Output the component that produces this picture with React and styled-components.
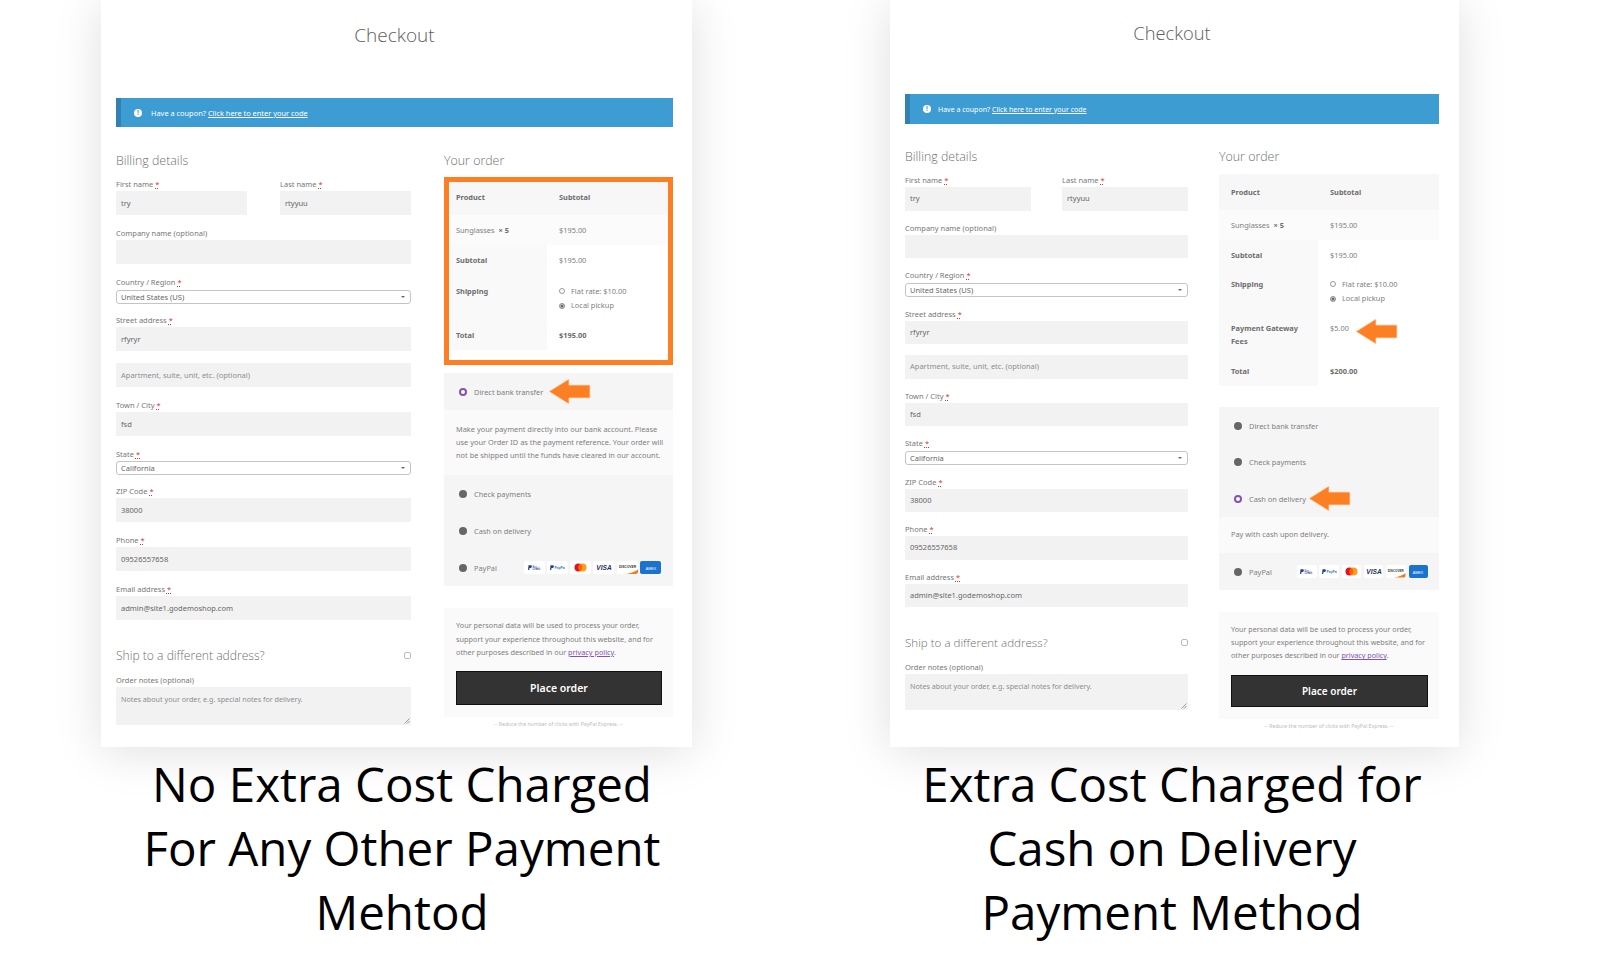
import React from 'react';
import styled, { createGlobalStyle, ThemeProvider } from 'styled-components';

const GlobalStyle = createGlobalStyle`
  html, body { margin: 0; padding: 0; background: #fff; overflow: hidden; }
  body { font-family: "Noto Sans", "Open Sans", sans-serif; }
`;

const leftTheme = {
  width: 591, padLeft: 15, padRight: 19, colLeft: 295, colRight: 229, colGap: 33,
  titleTop: 23, titleBottom: 50, titleSize: 19, couponH: 29, couponFont: 7.4, dotGap: 9,
  mainTop: 27, headH: 23, labelsTop: 1,
  inputH: 24, fieldGap: 12, selectGap: 10, selectTop: 0.5, twoGap: 33,
  shipH: 42, shipFont: 12.1, notesH: 38, chipW: 21, chipGap: 2.3, chipH: 13,
  termsLine: 13.6, termsFont: 7.3, buttonH: 34, buttonTop: 11, buttonFont: 10.5,
  thWidth: 98, cellNudge: 1, cellTop: 9.5, headLift: 3, capPadL: 11, capPadR: 0
};

const rightTheme = {
  width: 569, padLeft: 15, padRight: 20, colLeft: 283, colRight: 220, colGap: 31,
  titleTop: 20, titleBottom: 49, titleSize: 18.3, couponH: 30, couponFont: 7, dotGap: 7,
  mainTop: 26, headH: 24, labelsTop: 0,
  inputH: 23.5, fieldGap: 11, selectGap: 10.5, selectTop: 1, twoGap: 31,
  shipH: 43, shipFont: 11.6, notesH: 36, chipW: 19.5, chipGap: 2.8, chipH: 12.5,
  termsLine: 13.2, termsFont: 7.2, buttonH: 32, buttonTop: 12.5, buttonFont: 10,
  thWidth: 99, cellNudge: 0, cellTop: 7.5, headLift: 0, capPadL: 0, capPadR: 5
};

const Page = styled.div`
  display: flex;
  align-items: flex-start;
  gap: 198px;
  padding-left: 101px;
  height: 960px;
  box-sizing: border-box;
`;

const Panel = styled.section`
  width: ${p => p.theme.width}px;
  flex: none;
`;

const Card = styled.div`
  height: 747px;
  box-sizing: border-box;
  background: #fff;
  box-shadow: 0 4px 45px rgba(0, 0, 0, 0.13);
  padding: ${p => p.theme.titleTop}px ${p => p.theme.padRight}px 0 ${p => p.theme.padLeft}px;
`;

const Title = styled.h1`
  margin: 0 0 ${p => p.theme.titleBottom}px;
  height: 25px;
  line-height: 25px;
  font-size: ${p => p.theme.titleSize}px;
  font-weight: 300;
  color: #5d5d5d;
  text-align: center;
  font-family: "Open Sans", sans-serif;
`;

const Coupon = styled.div`
  display: flex;
  align-items: center;
  height: ${p => p.theme.couponH}px;
  box-sizing: border-box;
  background: #3d9cd2;
  border-left: 5px solid #2f82b3;
  padding-left: 13px;
  font-size: ${p => p.theme.couponFont}px;
  color: #fff;
`;

const InfoDot = styled.span`
  width: 8px;
  height: 8px;
  border-radius: 50%;
  background: #fff;
  color: #3d9cd2;
  font-size: 6.5px;
  font-weight: 700;
  line-height: 8px;
  text-align: center;
  margin-right: ${p => p.theme.dotGap}px;
`;

const CouponLink = styled.a`
  color: #fff;
  text-decoration: underline;
  margin-left: 2px;
`;

const Columns = styled.div`
  display: grid;
  grid-template-columns: ${p => p.theme.colLeft}px ${p => p.theme.colRight}px;
  column-gap: ${p => p.theme.colGap}px;
  padding-top: ${p => p.theme.mainTop}px;
`;

const SectionHead = styled.h3`
  margin: 0;
  height: ${p => p.theme.headH}px;
  line-height: 14px;
  font-size: 12.4px;
  font-weight: 300;
  color: #6f6f6f;
  font-family: "Open Sans", sans-serif;
`;

const FieldRow = styled.div`
  display: flex;
  justify-content: space-between;
  padding-top: ${p => p.theme.labelsTop}px;
`;

const Field = styled.div`
  width: ${p => (p.$half ? `${(p.theme.colLeft - p.theme.twoGap) / 2}px` : '100%')};
  margin-bottom: ${p => (p.$select ? p.theme.selectGap : p.theme.fieldGap)}px;
`;

const Label = styled.label`
  display: block;
  height: 13px;
  line-height: 12px;
  font-size: 7.5px;
  color: #777;
`;

const Req = styled.span`
  color: #d33;
  text-decoration: underline dotted;
`;

const Input = styled.div`
  height: ${p => p.theme.inputH}px;
  line-height: ${p => p.theme.inputH}px;
  padding-left: 5px;
  background: #f2f2f2;
  font-size: 7.5px;
  color: ${p => (p.$placeholder ? '#8e8e8e' : '#666')};
`;

const Select = styled.div`
  display: flex;
  align-items: center;
  justify-content: space-between;
  height: 14px;
  box-sizing: border-box;
  margin-top: ${p => p.theme.selectTop}px;
  padding: 0 5px 0 4px;
  background: #fff;
  border: 1px solid #c4c4c4;
  border-radius: 3px;
  font-size: 7.5px;
  color: #666;
`;

const Caret = styled.span`
  width: 0;
  height: 0;
  border-left: 2px solid transparent;
  border-right: 2px solid transparent;
  border-top: 2.5px solid #666;
`;

const ShipRow = styled.div`
  display: flex;
  align-items: center;
  justify-content: space-between;
  height: ${p => p.theme.shipH}px;
  font-size: ${p => p.theme.shipFont}px;
  font-weight: 300;
  color: #6f6f6f;
  font-family: "Open Sans", sans-serif;
  padding-top: 5px;
  box-sizing: border-box;
`;

const Check = styled.span`
  width: 7px;
  height: 7px;
  box-sizing: border-box;
  border: 1px solid #bbb;
  border-radius: 2px;
`;

const Notes = styled.div`
  position: relative;
  height: ${p => p.theme.notesH}px;
  padding: 7px 5px 0;
  box-sizing: border-box;
  background: #f2f2f2;
  font-size: 7.2px;
  color: #8e8e8e;
`;

const Grip = styled.svg`
  position: absolute;
  right: 1px;
  bottom: 1px;
`;

const OrderFrame = styled.div`
  ${p => (p.$highlight
    ? `border: 5.5px solid #fd7f23; height: 188px; box-sizing: border-box;`
    : '')}
  margin-bottom: ${p => p.$after}px;
`;

const OrderTable = styled.table`
  width: 100%;
  border-collapse: collapse;
  table-layout: fixed;
  font-size: 7.4px;
  color: #808080;
`;

const Tr = styled.tr`
  height: ${p => p.$h}px;
  background: ${p => p.$bg || 'transparent'};
`;

const Th = styled.th`
  width: ${p => p.theme.thWidth}px;
  box-sizing: border-box;
  padding: ${p => (p.$top ? p.theme.cellTop : p.theme.cellNudge)}px 0 ${p => (p.$head ? p.theme.headLift : 0)}px ${p => p.$pad}px;
  vertical-align: ${p => (p.$top ? 'top' : 'middle')};
  text-align: left;
  font-weight: 700;
  color: #6d6d6d;
  line-height: 13px;
  background: ${p => p.$bg || 'transparent'};
`;

const Td = styled.td`
  padding: ${p => (p.$top ? p.theme.cellTop : p.theme.cellNudge)}px 0 ${p => (p.$head ? p.theme.headLift : 0)}px ${p => p.$pad || 12}px;
  vertical-align: ${p => (p.$top ? 'top' : 'middle')};
  line-height: 13px;
  font-weight: ${p => (p.$bold ? 700 : 400)};
  color: ${p => (p.$bold ? '#6d6d6d' : '#808080')};
`;

const ValueWithArrow = styled.div`
  display: flex;
  align-items: flex-start;
  gap: ${p => p.$gap}px;
`;

const Quantity = styled.strong`
  margin-left: 2px;
  color: #6d6d6d;
`;

const ShipOption = styled.div`
  display: flex;
  align-items: center;
  gap: 6px;
  height: 15.5px;
  margin-top: -1px;
`;

const SmallRadio = styled.span`
  width: 6px;
  height: 6px;
  box-sizing: border-box;
  border-radius: 50%;
  border: 1px solid #999;
  background: ${p => (p.$on ? '#666' : '#fff')};
  box-shadow: ${p => (p.$on ? 'inset 0 0 0 0.5px #fff' : 'none')};
`;

const Payments = styled.div`
  background: #f5f5f5;
`;

const PayRow = styled.div`
  display: flex;
  align-items: center;
  height: ${p => p.$h || 37}px;
  padding: 0 ${p => p.$padR}px 0 15px;
  font-size: 7.4px;
  color: #808080;
`;

const Radio = styled.span`
  width: 8px;
  height: 8px;
  box-sizing: border-box;
  flex: none;
  border-radius: 50%;
  margin-right: 7px;
  background: ${p => (p.$on ? '#fff' : '#666')};
  border: ${p => (p.$on ? '2.8px solid #7f54b3' : 'none')};
`;

const PayNote = styled.p`
  margin: 0;
  padding: 0 5px 0 12px;
  background: #fafafa;
  height: ${p => p.$h}px;
  display: flex;
  align-items: center;
  font-size: 7.4px;
  line-height: 13.3px;
  color: #808080;
`;

const Arrow = styled.svg`
  flex: none;
  margin: ${p => p.$mt || 0}px 0 0 ${p => p.$ml || 0}px;
  overflow: visible;
`;

const Chips = styled.div`
  display: flex;
  gap: ${p => p.theme.chipGap}px;
  margin-left: auto;
`;

const Chip = styled.span`
  display: flex;
  align-items: center;
  justify-content: center;
  width: ${p => p.theme.chipW}px;
  height: ${p => p.theme.chipH}px;
  border-radius: 2px;
  background: ${p => p.$bg || '#fff'};
`;

const Terms = styled.div`
  margin-top: 22px;
  background: #fafafa;
  padding: 11px 11px 12px 12px;
  font-size: ${p => p.theme.termsFont}px;
  line-height: ${p => p.theme.termsLine}px;
  color: #808080;
`;

const TermsLink = styled.a`
  color: #7f54b3;
  text-decoration: underline;
`;

const PlaceOrder = styled.button`
  display: block;
  width: 100%;
  height: ${p => p.theme.buttonH}px;
  margin-top: ${p => p.theme.buttonTop}px;
  box-sizing: border-box;
  border: 1px solid #111;
  background: #333;
  color: #fff;
  font-family: inherit;
  font-size: ${p => p.theme.buttonFont}px;
  font-weight: 600;
`;

const Express = styled.div`
  margin-top: 3px;
  text-align: center;
  font-size: 5.2px;
  line-height: 8px;
  color: #bbb;
`;

const Caption = styled.h2`
  margin: 5px 0 0;
  padding: 0 ${p => p.theme.capPadR}px 0 ${p => p.theme.capPadL}px;
  font-family: "Open Sans", sans-serif;
  font-size: 47.5px;
  font-weight: 400;
  line-height: 64px;
  text-align: center;
  color: #000;
  white-space: nowrap;
`;

const OrangeArrow = ({ ml, mt }) => (
  <Arrow $ml={ml} $mt={mt} width={43} height={27} viewBox="0 0 43 27">
    <polygon
      points="1,13.5 21,1 21,7 42,7 42,20 21,20 21,26"
      fill="#fd7f23"
      stroke="#ffd9bd"
      strokeWidth="0.8"
    />
  </Arrow>
);

const PayPalMark = () => (
  <svg width="4" height="5.5" viewBox="0 0 8 10">
    <path d="M1 0h4c2 0 3 1 2.600 3C7.200 5 6 5.600 4 5.600H3L2.400 9.500H0z" fill="#1f3f8f" />
  </svg>
);

const PaymentChips = () => (
  <Chips>
    <Chip>
      <PayPalMark />
      <svg width="9" height="6" viewBox="0 0 9 6">
        <text x="0.5" y="2.6" fontSize="2.6" fill="#1f3f8f" fontFamily="Liberation Sans">Pay</text>
        <text x="0.5" y="5.4" fontSize="2.6" fontWeight="700" fill="#1f3f8f" fontFamily="Liberation Sans">Credit</text>
      </svg>
    </Chip>
    <Chip>
      <PayPalMark />
      <svg width="11" height="5" viewBox="0 0 11 5">
        <text x="0.5" y="3.8" fontSize="3.4" fontWeight="700" fill="#3a6db5" fontFamily="Liberation Sans">PayPal</text>
      </svg>
    </Chip>
    <Chip>
      <svg width="13" height="9" viewBox="0 0 13 9">
        <circle cx="4.5" cy="4.5" r="4" fill="#e8101f" />
        <circle cx="8.5" cy="4.5" r="4" fill="#f79e1b" />
        <path d="M6.500 1.100a4 4 0 0 1 0 6.800a4 4 0 0 1 0-6.800z" fill="#ff5f00" />
      </svg>
    </Chip>
    <Chip>
      <svg width="16" height="7" viewBox="0 0 16 7">
        <text x="8" y="6" textAnchor="middle" fontSize="6.600" fontWeight="700" fontStyle="italic" fill="#1f2f66" fontFamily="Liberation Sans">VISA</text>
      </svg>
    </Chip>
    <Chip>
      <svg width="21" height="13" viewBox="0 0 21 13">
        <text x="10.500" y="6.800" textAnchor="middle" fontSize="3.300" fontWeight="700" fill="#333" fontFamily="Liberation Sans">DISCOVER</text>
        <path d="M9 13C14 12 18 10.500 21 8.500V11a2 2 0 0 1-2 2z" fill="#f47a20" />
      </svg>
    </Chip>
    <Chip $bg="#1c72cf">
      <svg width="16" height="6" viewBox="0 0 16 6">
        <text x="8" y="4.600" textAnchor="middle" fontSize="3.700" fontWeight="400" fill="#fff" fontFamily="Liberation Sans">AMEX</text>
      </svg>
    </Chip>
  </Chips>
);

const R = () => <Req>*</Req>;

const TextField = ({ label, req, value, half, placeholder }) => (
  <Field $half={half}>
    {label && <Label>{label} {req && <R />}</Label>}
    <Input $placeholder={placeholder}>{value}</Input>
  </Field>
);

const SelectField = ({ label, value }) => (
  <Field $select>
    <Label>{label} <R /></Label>
    <Select>{value}<Caret /></Select>
  </Field>
);

const Billing = () => (
  <div>
    <SectionHead>Billing details</SectionHead>
    <FieldRow>
      <TextField half label="First name" req value="try" />
      <TextField half label="Last name" req value="rtyyuu" />
    </FieldRow>
    <TextField label="Company name (optional)" />
    <SelectField label="Country / Region" value="United States (US)" />
    <TextField label="Street address" req value="rfyryr" />
    <TextField placeholder value="Apartment, suite, unit, etc. (optional)" />
    <TextField label="Town / City" req value="fsd" />
    <SelectField label="State" value="California" />
    <TextField label="ZIP Code" req value="38000" />
    <TextField label="Phone" req value="09526557658" />
    <TextField label="Email address" req value="admin@site1.godemoshop.com" />
    <ShipRow>Ship to a different address?<Check /></ShipRow>
    <Label>Order notes (optional)</Label>
    <Notes>
      Notes about your order, e.g. special notes for delivery.
      <Grip width="6" height="6" viewBox="0 0 6 6">
        <path d="M0.500 5.500L5.500 0.500M3 5.500L5.500 3" stroke="#777" strokeWidth="0.7" />
      </Grip>
    </Notes>
  </div>
);

const LocalShipping = () => (
  <>
    <ShipOption><SmallRadio />Flat rate: $10.00</ShipOption>
    <ShipOption><SmallRadio $on />Local pickup</ShipOption>
  </>
);

const TermsBlock = () => (
  <>
    <Terms>
      Your personal data will be used to process your order, support your experience throughout this website, and for other purposes described in our <TermsLink>privacy policy</TermsLink>.
      <PlaceOrder>Place order</PlaceOrder>
    </Terms>
    <Express>-- Reduce the number of clicks with PayPal Express. --</Express>
  </>
);

const App = () => (
  <>
    <GlobalStyle />
    <Page>
      <ThemeProvider theme={leftTheme}>
        <Panel>
          <Card>
            <Title>Checkout</Title>
            <Coupon>
              <InfoDot>!</InfoDot>Have a coupon?<CouponLink>Click here to enter your code</CouponLink>
            </Coupon>
            <Columns>
              <Billing />
              <div>
                <SectionHead>Your order</SectionHead>
                <OrderFrame $highlight $after={8}>
                  <OrderTable>
                    <tbody>
                      <Tr $h={33} $bg="#f7f7f7"><Th $head $pad={7}>Product</Th><Td $head $bold>Subtotal</Td></Tr>
                      <Tr $h={30} $bg="#fbfbfb"><Td $pad={7}>Sunglasses <Quantity>× 5</Quantity></Td><Td>$195.00</Td></Tr>
                      <Tr $h={30}><Th $pad={7} $bg="#f9f9f9">Subtotal</Th><Td>$195.00</Td></Tr>
                      <Tr $h={45}><Th $pad={7} $top $bg="#f9f9f9">Shipping</Th><Td $top><LocalShipping /></Td></Tr>
                      <Tr $h={30}><Th $pad={7} $bg="#f9f9f9">Total</Th><Td $bold>$195.00</Td></Tr>
                    </tbody>
                  </OrderTable>
                </OrderFrame>
                <Payments>
                  <PayRow $padR={12}><Radio $on />Direct bank transfer<OrangeArrow ml={5} /></PayRow>
                  <PayNote $h={65}>Make your payment directly into our bank account. Please use your Order ID as the payment reference. Your order will not be shipped until the funds have cleared in our account.</PayNote>
                  <PayRow $padR={12}><Radio />Check payments</PayRow>
                  <PayRow $padR={12}><Radio />Cash on delivery</PayRow>
                  <PayRow $padR={12}><Radio />PayPal<PaymentChips /></PayRow>
                </Payments>
                <TermsBlock />
              </div>
            </Columns>
          </Card>
          <Caption>No Extra Cost Charged<br />For Any Other Payment<br />Mehtod</Caption>
        </Panel>
      </ThemeProvider>
      <ThemeProvider theme={rightTheme}>
        <Panel>
          <Card>
            <Title>Checkout</Title>
            <Coupon>
              <InfoDot>!</InfoDot>Have a coupon?<CouponLink>Click here to enter your code</CouponLink>
            </Coupon>
            <Columns>
              <Billing />
              <div>
                <SectionHead>Your order</SectionHead>
                <OrderFrame $after={21}>
                  <OrderTable>
                    <tbody>
                      <Tr $h={36} $bg="#f7f7f7"><Th $head $pad={12}>Product</Th><Td $head $bold>Subtotal</Td></Tr>
                      <Tr $h={30} $bg="#fbfbfb"><Td $pad={12}>Sunglasses <Quantity>× 5</Quantity></Td><Td>$195.00</Td></Tr>
                      <Tr $h={30}><Th $pad={12} $bg="#f9f9f9">Subtotal</Th><Td>$195.00</Td></Tr>
                      <Tr $h={44}><Th $pad={12} $top $bg="#f9f9f9">Shipping</Th><Td $top><LocalShipping /></Td></Tr>
                      <Tr $h={42}>
                        <Th $pad={12} $top $bg="#f9f9f9">Payment Gateway<br />Fees</Th>
                        <Td $top><ValueWithArrow $gap={6}>$5.00<OrangeArrow mt={-4} /></ValueWithArrow></Td>
                      </Tr>
                      <Tr $h={30}><Th $pad={12} $bg="#f9f9f9">Total</Th><Td $bold>$200.00</Td></Tr>
                    </tbody>
                  </OrderTable>
                </OrderFrame>
                <Payments>
                  <PayRow $padR={11}><Radio />Direct bank transfer</PayRow>
                  <PayRow $padR={11} $h={36}><Radio />Check payments</PayRow>
                  <PayRow $padR={11} $h={37}><Radio $on />Cash on delivery<OrangeArrow ml={2} /></PayRow>
                  <PayNote $h={36}>Pay with cash upon delivery.</PayNote>
                  <PayRow $padR={11}><Radio />PayPal<PaymentChips /></PayRow>
                </Payments>
                <TermsBlock />
              </div>
            </Columns>
          </Card>
          <Caption>Extra Cost Charged for<br />Cash on Delivery<br />Payment Method</Caption>
        </Panel>
      </ThemeProvider>
    </Page>
  </>
);

export default App;
